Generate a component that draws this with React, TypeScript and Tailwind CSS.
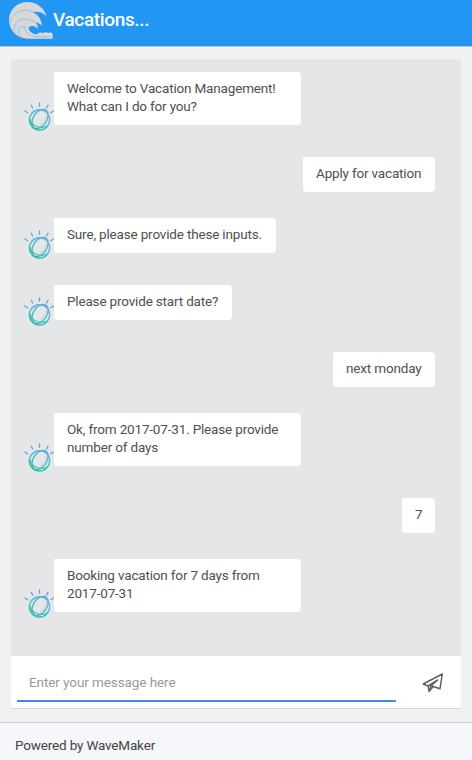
import React from "react";

type Message = { from: "bot" | "user"; lines: string[]; width: string };

const messages: Message[] = [
  { from: "bot", lines: ["Welcome to Vacation Management!", "What can I do for you?"], width: "w-[247px]" },
  { from: "user", lines: ["Apply for vacation"], width: "w-[132px]" },
  { from: "bot", lines: ["Sure, please provide these inputs."], width: "w-[222px]" },
  { from: "bot", lines: ["Please provide start date?"], width: "w-[178px]" },
  { from: "user", lines: ["next monday"], width: "w-[102px]" },
  { from: "bot", lines: ["Ok, from 2017-07-31. Please provide", "number of days"], width: "w-[247px]" },
  { from: "user", lines: ["7"], width: "w-[33px]" },
  { from: "bot", lines: ["Booking vacation for 7 days from", "2017-07-31"], width: "w-[247px]" },
];

function WaveLogo() {
  return (
    <svg className="ml-[9px] h-[38px] w-[44px] shrink-0" viewBox="27 6 132 114">
      <path
        d="M140 51C134 24 110 6 82 6C51 6 27 30 27 60C27 92 52 116 84 116H158V105C158 98 151 96 146 99C140 95 133 96 129 100C123 96 116 98 112 103C98 104 86 94 86 82C94 74 107 78 114 87C114 80 112 74 108 68C117 68 122 72 126 78C125 66 121 55 112 46C107 41 103 38 99 36C117 34 131 38 140 51Z"
        fill="#d8d8d8"
      />
      <g fill="none" stroke="#6fb3ea" strokeWidth="2">
        <path d="M30 70C35 43 61 24 90 33C96 34 102 38 108 43" />
        <path d="M43 95C38 73 54 56 76 57C90 58 101 63 108 69" />
        <path d="M66 111C49 100 53 81 74 79C75 98 87 109 108 110H151" />
      </g>
    </svg>
  );
}

function BotAvatar() {
  return (
    <svg className="h-[30px] w-[30px] shrink-0" viewBox="0 0 30 30" fill="none">
      <defs>
        <linearGradient id="orb" x1="22" y1="7" x2="12" y2="28" gradientUnits="userSpaceOnUse">
          <stop stopColor="#6fa5df" />
          <stop offset="0.55" stopColor="#50bdcb" />
          <stop offset="1" stopColor="#2dbda9" />
        </linearGradient>
      </defs>
      <g stroke="#62a5dd" strokeWidth="1.3" strokeLinecap="round">
        <path d="M15.5 2V5.2M7.2 4.3L8.7 7M24 4.3L22.4 7M0.8 10L3.7 11.7M29.6 10L26.9 11.6" />
      </g>
      <g stroke="url(#orb)">
        <circle cx="15.5" cy="18.8" r="10.2" strokeWidth="1.3" />
        <ellipse cx="16" cy="18" rx="6.8" ry="10.6" transform="rotate(33 16 18)" strokeWidth="1.4" />
        <path d="M5.6 17C6 23 14 29 23.5 25" strokeWidth="1.3" />
        <path d="M6.8 14.5C10 8.5 17 8 22 10.5" strokeWidth="1.5" opacity="0.5" />
        <path d="M22 14C22 18 20 22 16 24" strokeWidth="1.2" opacity="0.25" />
      </g>
    </svg>
  );
}

function SendIcon() {
  return (
    <svg className="h-[20px] w-[22px]" viewBox="0 0 22 20" fill="none" stroke="#606060" strokeWidth="1.5" strokeLinejoin="round">
      <path d="M1.2 11L20.3 1L18 15.8L11.2 13.5L7 18.4L6.2 13Z" />
      <path d="M6.2 13L15.7 7L9.1 12.8L7 18.2M9.1 12.8L11.3 13.5" />
    </svg>
  );
}

function MessageRow({ message }: { message: Message }) {
  const bot = message.from === "bot";
  return (
    <div className={bot ? "flex items-end" : "flex items-start justify-end pr-[26px]"}>
      {bot && <BotAvatar />}
      <div
        className={`${message.width} ${bot ? "mb-[6px]" : ""} shrink-0 whitespace-nowrap rounded-[4px] rounded-tl-[1px] bg-white pt-[7px] pb-[10px] pl-[13px] text-[13.5px] leading-[18px] tracking-[-0.17px] text-[#505050]`}
      >
        {message.lines.map((line) => (
          <div key={line}>{line}</div>
        ))}
      </div>
    </div>
  );
}

export default function App() {
  return (
    <div className="flex h-[760px] w-[472px] flex-col overflow-hidden bg-[#f0f1f3] font-['Roboto',sans-serif]">
      <header className="flex h-[47px] shrink-0 items-start border-b border-[#b9c3cc] bg-[#2196f3] pt-[2px]">
        <WaveLogo />
        <h1 className="pt-[4px] text-[19px] leading-[27px] font-medium tracking-[-0.36px] text-white">Vacations...</h1>
      </header>
      <main className="flex h-[675px] shrink-0 flex-col px-[11px] pt-[12px]">
        <div className="flex h-[597px] shrink-0 flex-col gap-[26px] bg-[#e4e6e8] pt-[13px] pl-[13px]">
          {messages.map((m) => (
            <MessageRow key={m.lines[0]} message={m} />
          ))}
        </div>
        <div className="flex h-[53px] shrink-0 rounded-b-[3px] border-b border-[#d3d5d7] bg-white pl-[6px]">
          <div className="flex h-[46px] w-[379px] items-center border-b-2 border-[#4285f4] pt-[8px] pl-[12px] text-[13.5px] tracking-[-0.09px] text-[#999]">
            Enter your message here
          </div>
          <div className="pt-[17px] pl-[26px]">
            <SendIcon />
          </div>
        </div>
      </main>
      <footer className="h-[38px] shrink-0 border-t border-[#c9cbce] bg-[#f5f7fb] pt-[12px] pl-[15px] text-[13.5px] leading-[20px] tracking-[-0.17px] text-[#444]">
        Powered by WaveMaker
      </footer>
    </div>
  );
}
